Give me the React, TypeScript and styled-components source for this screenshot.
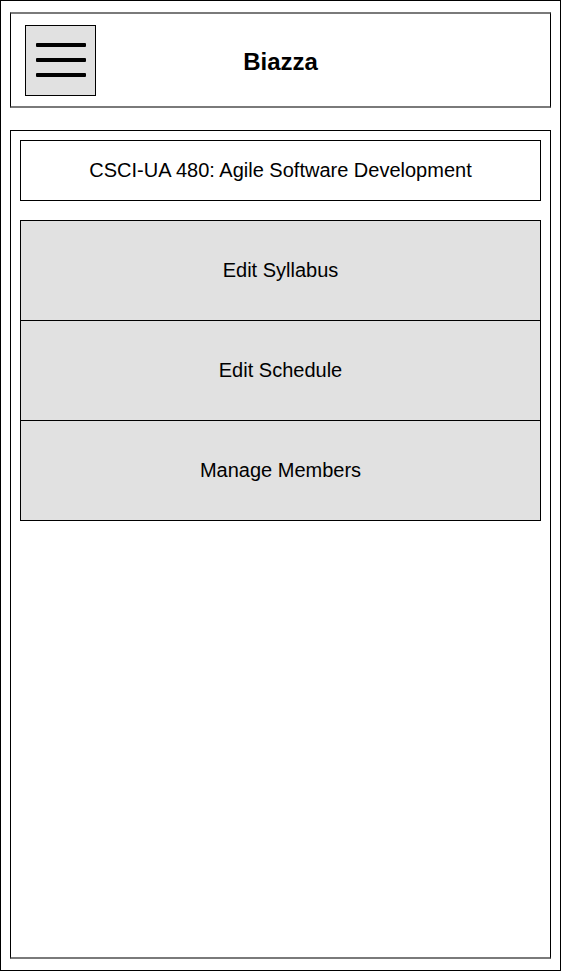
import React from "react";
import styled, { createGlobalStyle } from "styled-components";

const Global = createGlobalStyle`
  html, body { margin: 0; padding: 0; background: #fff; }
  body { font-family: "Liberation Sans", Arial, sans-serif; color: #000; }
  * { box-sizing: border-box; }
`;

const Frame = styled.div`
  width: 561px;
  height: 971px;
  border: 1px solid #000;
  padding: 11px 9px 11px 9px;
  display: flex;
  flex-direction: column;
  gap: 22px;
`;

const Header = styled.header`
  height: 96px;
  border-left: 1px solid #000;
  border-right: 1px solid #000;
  border-top: 2px solid #7a7a7a;
  border-bottom: 2px solid #7a7a7a;
  display: grid;
  grid-template-columns: 1fr auto 1fr;
  align-items: center;
  padding: 0 14px;
`;

const MenuButton = styled.button`
  width: 71px;
  height: 71px;
  background: #e1e1e1;
  border: 1px solid #000;
  padding: 0;
  display: flex;
  flex-direction: column;
  align-items: center;
  justify-content: center;
  gap: 11px;
`;

const Bar = styled.span`
  display: block;
  width: 50px;
  height: 4px;
  border-radius: 1px;
  background: #000;
`;

const Title = styled.h1`
  margin: 0;
  text-align: center;
  font-size: 24px;
  font-weight: bold;
  line-height: 1;
  padding-top: 3px;
`;

const Main = styled.main`
  flex: 1;
  border-left: 1px solid #000;
  border-right: 1px solid #000;
  border-top: 1px solid #000;
  border-bottom: 2px solid #7a7a7a;
  padding: 9px 9px;
  display: flex;
  flex-direction: column;
  gap: 19px;
`;

const Course = styled.div`
  height: 61px;
  border: 1px solid #000;
  display: flex;
  align-items: center;
  justify-content: center;
  font-size: 20px;
`;

const ActionList = styled.div`
  display: flex;
  flex-direction: column;
  border: 1px solid #000;
`;

const Action = styled.button<{ $first?: boolean }>`
  height: ${(p) => (p.$first ? "99px" : "100px")};
  background: #e1e1e1;
  border: none;
  border-top: ${(p) => (p.$first ? "none" : "1px solid #000")};
  font-family: "Liberation Sans", Arial, sans-serif;
  font-size: 20px;
  color: #000;
  padding: 0;
`;

export default function App() {
  const actions = ["Edit Syllabus", "Edit Schedule", "Manage Members"];
  return (
    <>
      <Global />
      <Frame>
        <Header>
          <MenuButton aria-label="menu">
            <Bar />
            <Bar />
            <Bar />
          </MenuButton>
          <Title>Biazza</Title>
          <span />
        </Header>
        <Main>
          <Course>CSCI-UA 480: Agile Software Development</Course>
          <ActionList>
            {actions.map((a, i) => (
              <Action key={a} $first={i === 0}>
                {a}
              </Action>
            ))}
          </ActionList>
        </Main>
      </Frame>
    </>
  );
}
